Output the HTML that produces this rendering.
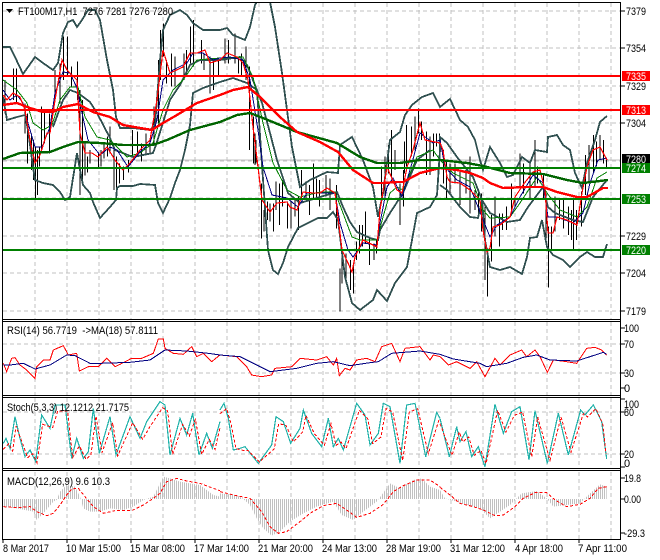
<!DOCTYPE html>
<html><head><meta charset="utf-8"><title>FT100M17,H1</title>
<style>
html,body{margin:0;padding:0;background:#fff;width:660px;height:560px;overflow:hidden}
svg{display:block}
text{font-family:"Liberation Sans",sans-serif;font-size:11px;fill:#000;white-space:pre}
polyline,path.n{fill:none;vector-effect:non-scaling-stroke}
.z *{vector-effect:non-scaling-stroke}
</style></head><body>
<svg width="660" height="560" viewBox="0 0 660 560" xmlns="http://www.w3.org/2000/svg">
<defs>
<pattern id="bars" patternUnits="userSpaceOnUse" width="2" height="4"><rect width="1" height="4" fill="#c0c0c0"/></pattern>
<clipPath id="main"><rect x="3" y="3" width="617" height="316"/></clipPath>
<clipPath id="hist">
<polygon transform="scale(.33333) translate(0,945)" points="10,552 10,575 50,580 100,590 110,615 130,595 160,560 170,555 180,530 200,510 225,515 240,545 250,580 270,590 300,590 330,580 370,585 400,575 430,555 460,545 480,505 490,485 510,490 540,500 570,505 600,510 640,540 660,545 660,552"/>
<polygon transform="translate(220,315) scale(.33333)" points="0,552 0,535 50,540 70,552 90,570 110,610 130,640 155,662 180,650 210,620 250,595 290,575 340,560 365,600 400,615 430,590 470,560 485,540 510,505 540,520 580,495 605,490 630,515 660,525 660,552"/>
<polygon transform="translate(440,315) scale(.33333)" points="0,552 0,525 15,550 50,560 80,570 120,580 150,610 180,590 210,570 230,550 245,535 290,528 320,550 340,575 380,570 420,565 440,545 480,508 500,515 500,552"/>
</clipPath>
</defs>
<rect width="660" height="560" fill="#fff"/>

<!-- grid -->
<g stroke="#c0c0c0" stroke-dasharray="4 3" fill="none" shape-rendering="crispEdges">
<path d="M35 3V319M67 3V319M99 3V319M131 3V319M163 3V319M195 3V319M227 3V319M259 3V319M291 3V319M323 3V319M355 3V319M387 3V319M419 3V319M451 3V319M483 3V319M515 3V319M547 3V319M579 3V319M611 3V319"/>
<path d="M3 11H620M3 48H620M3 86H620M3 123H620M3 161H620M3 198H620M3 236H620M3 273H620M3 311H620"/>
<path d="M35 322V395M67 322V395M99 322V395M131 322V395M163 322V395M195 322V395M227 322V395M259 322V395M291 322V395M323 322V395M355 322V395M387 322V395M419 322V395M451 322V395M483 322V395M515 322V395M547 322V395M579 322V395M611 322V395"/>
<path d="M3 344H620M3 373H620"/>
<path d="M35 398V468M67 398V468M99 398V468M131 398V468M163 398V468M195 398V468M227 398V468M259 398V468M291 398V468M323 398V468M355 398V468M387 398V468M419 398V468M451 398V468M483 398V468M515 398V468M547 398V468M579 398V468M611 398V468"/>
<path d="M3 412H620M3 454H620"/>
<path d="M35 472V539M67 472V539M99 472V539M131 472V539M163 472V539M195 472V539M227 472V539M259 472V539M291 472V539M323 472V539M355 472V539M387 472V539M419 472V539M451 472V539M483 472V539M515 472V539M547 472V539M579 472V539M611 472V539"/>
</g>
<path d="M3 160H620" stroke="#c0c0c0" shape-rendering="crispEdges"/>

<g clip-path="url(#main)">
<!-- candle wicks -->
<g class="z" stroke="#000" stroke-width="1" fill="none" shape-rendering="crispEdges">
<path transform="scale(.33333)" d="M15 240V340M40 205V300M50 205V310M75 310V400M83 340V490M95 400V510M100 420V540M107 440V595M112 450V585M118 440V500M125 320V450M133 330V430M148 340V460M165 210V300M180 190V310M190 110V240M202 110V230M215 200V260M232 185V300M240 270V585M248 300V550M255 425V527M262 470V517M270 450V490M295 460V505M303 450V500M312 430V475M322 410V470M330 380V460M342 440V570M350 470V590M358 490V550M370 500V540M385 480V517M397 390V470M413 395V470M425 430V485M438 400V460M450 420V460M462 320V430M475 180V370M482 90V240M490 70V170M500 180V250M515 160V260M525 170V260M552 160V240M560 150V230M572 80V190M580 60V200M605 120V190M612 160V210M630 170V280M640 180V270M655 175V230"/>
<path transform="translate(220,0) scale(.33333)" d="M15 115V190M25 120V190M45 100V190M55 170V220M65 160V225M78 140V240M88 200V450M100 350V490M105 400V495M108 420V490M125 550V715M132 630V695M142 605V660M150 610V665M160 610V695M168 545V630M178 550V675M188 540V620M203 605V685M213 605V685M225 595V650M235 590V690M245 510V600M258 545V595M268 555V645M280 490V600M290 535V595M298 540V620M318 525V590M330 535V630M350 555V685M360 805V935M366 760V850M378 760V850M392 780V870M400 800V880M410 725V780M418 675V760M428 675V740M436 635V730M448 715V795M462 730V780M470 720V760M485 500V590M495 470V600M505 435V520M515 390V530M525 450V510M540 550V675M550 510V620M553 425V520M560 375V500M575 380V470M585 350V450M595 325V400M605 365V420M620 395V525M630 410V525M640 400V470M650 400V440M658 400V440"/>
<path transform="translate(440,0) scale(.33333)" d="M10 450V550M20 480V600M30 490V580M45 490V550M60 510V615M78 510V580M90 470V640M105 570V630M115 570V640M125 580V695M135 620V840M143 745V890M155 645V785M165 590V710M178 640V740M188 640V690M200 620V690M215 550V640M225 590V620M240 460V560M250 490V580M270 490V600M285 420V560M293 500V550M310 520V600M318 580V735M325 680V862M335 680V750M345 590V695M358 595V660M370 600V685M385 620V705M395 630V720M400 600V750M410 630V720M425 575V680M437 465V585M447 435V550M460 405V520M470 425V500M480 405V480M490 420V490M500 475V505"/>
</g>
<!-- bollinger bands -->
<g fill="none" stroke="#2f4f4f" stroke-width="1.8" shape-rendering="crispEdges">
<polyline points="3,47 10,47 15,57 23,74 28,67 35,57 43,63 53,70 58,63 63,33 68,22 73,20 77,27 82,20 88,10 95,10 100,20 107,60 113,90 116,117 120,128 133,128 150,130 155,125 160,60 163,30 170,15 180,10 187,15 193,23 203,30 220,30 227,28 233,35 245,40 250,27 255,5 257,2 270,2 275,27 282,73 287,110 292,147 300,187 310,180 327,172 338,173 340,145 352,137 363,160 373,187 378,217 383,193 390,140 400,132 405,115 412,105 422,97 433,93 440,107 450,99 460,120 468,127 475,140 480,160 483,170 490,147 500,163 507,177 513,175 522,157 530,163 535,150 547,152 548,137 557,135 563,145 570,150 575,173 582,188 587,163 595,140 600,122 607,116"/>
<polyline points="3,97 7,120 17,117 25,115 28,130 33,167 35,180 43,183 53,185 60,192 65,200 70,197 77,153 80,170 83,185 90,193 93,202 100,218 110,207 116,200 117,188 120,186 133,186 140,184 155,185 158,203 163,213 170,198 175,183 180,170 185,150 190,125 193,93 203,88 220,82 233,78 247,83 257,90 262,165 268,250 273,270 278,274 283,263 288,247 298,228 308,223 318,218 327,218 333,212 338,220 345,277 352,303 360,310 373,300 377,290 387,301 395,283 407,267 417,213 430,207 437,195 440,150 440,137 447,143 457,157 473,177 482,200 485,240 490,267 500,270 510,267 522,274 527,257 530,238 537,237 542,220 547,247 553,255 563,260 570,267 580,257 587,252 595,257 603,257 607,244"/>
<polyline points="53,127 63,100 70,90 78,93 90,102 97,113 110,138 115,150 133,157 153,153 156,145 170,100 180,85 190,65 200,60 220,60 240,57 247,65 262,103 270,133 277,160 288,193 300,203 310,200 320,197 337,192 343,207 350,222 357,232 370,238 378,240 380,230 390,213 403,193 417,160 430,150"/>
<polyline points="440,185 447,190 460,207 470,217 478,218 482,200 490,213 507,222 520,220 528,207 543,187 548,207 555,213 573,220 583,222 593,197 607,180"/>
</g>
<!-- moving averages -->
<g fill="none" shape-rendering="crispEdges">
<polyline stroke="#008000" stroke-width="1" points="3,80 17,90 27,103 33,123 43,130 52,125 60,100 70,87 78,87 85,117 97,137 110,140 117,147 127,157 140,153 153,143 163,110 173,90 183,80 197,60 220,58 243,57 253,77 263,123 273,163 287,190 300,197 320,192 335,192 343,213 352,237 360,240 377,240 383,217 390,193 397,187 403,190 417,157 433,150 440,160 453,173 473,183 483,210 490,218 510,217 520,203 537,177 547,193 560,210 577,217 587,207 597,178 607,172"/>
<polyline stroke="#000080" stroke-width="1" points="3,90 10,100 17,95 23,103 28,123 35,147 42,147 50,127 55,93 63,72 70,73 77,88 82,113 88,140 100,155 110,147 117,150 128,167 140,152 150,143 157,120 163,80 173,70 187,63 193,53 203,53 213,60 220,58 230,57 243,60 250,80 258,130 263,167 272,195 287,198 298,207 307,193 320,193 335,193 340,223 348,250 353,257 363,243 377,245 380,223 387,187 393,178 402,197 412,163 420,133 433,143 440,140 445,167 457,180 470,187 482,217 490,237 497,225 510,217 520,197 533,175 543,183 548,217 557,217 573,223 583,213 590,183 598,160 607,158"/>
<polyline stroke="#ff0000" stroke-width="1.2" points="3,95 7,100 13,93 20,97 25,110 30,140 35,163 40,155 47,133 50,133 55,100 62,60 67,70 77,80 80,133 85,153 92,153 98,157 107,147 115,160 123,170 130,163 140,150 150,140 157,100 163,50 170,73 183,67 190,53 197,53 205,50 210,63 220,60 227,53 237,57 243,63 248,80 253,127 258,167 262,200 270,212 277,203 287,202 290,207 297,210 303,192 313,193 320,193 327,188 335,193 338,217 342,250 348,263 352,272 355,257 363,240 373,245 377,247 380,210 387,167 397,190 402,193 407,167 413,150 420,123 425,140 440,143 443,150 447,177 450,182 460,183 470,190 480,200 483,230 487,252 490,248 493,227 500,225 510,217 515,197 523,185 533,172 540,170 545,190 548,233 553,233 557,217 567,220 577,225 582,193 587,167 593,150 600,147 607,160"/>
<polyline stroke="#006400" stroke-width="2.4" points="3,159 20,153 50,152 63,147 78,142 100,143 123,145 153,145 167,140 190,130 220,122 237,115 250,113 263,118 297,132 337,143 360,157 377,163 400,163 420,160 440,160 467,163 483,166 510,173 543,174 567,180 583,183 608,180"/>
<polyline stroke="#ff0000" stroke-width="2.4" points="3,105 17,103 30,108 43,112 53,112 63,107 78,104 93,112 110,117 123,125 140,128 152,130 163,123 177,115 197,103 220,95 233,90 248,87 260,97 280,117 297,132 320,142 338,152 353,170 373,183 383,183 397,182 403,182 420,173 440,168 457,170 470,173 483,178 490,183 503,188 527,187 543,187 557,192 577,197 587,197 603,188 608,188"/>
</g>
<!-- levels -->
<g shape-rendering="crispEdges">
<rect x="3" y="75" width="617" height="2" fill="#ff0000"/>
<rect x="3" y="109" width="617" height="2" fill="#ff0000"/>
<rect x="3" y="167" width="617" height="2" fill="#008000"/>
<rect x="3" y="198" width="617" height="2" fill="#008000"/>
<rect x="3" y="249" width="617" height="2" fill="#008000"/>
</g>
</g>

<!-- RSI -->
<g class="z" fill="none" shape-rendering="crispEdges">
<g transform="translate(0,315) scale(.33333)">
<polyline stroke="#ff0000" points="10,145 20,170 35,130 45,128 60,150 80,165 105,190 110,155 130,135 150,135 160,105 190,92 205,120 230,115 238,168 265,155 295,155 320,130 345,155 360,148 395,130 425,130 460,115 475,72 490,72 495,100 520,115 550,118 575,95 590,125 610,115 635,140 660,120"/>
<polyline stroke="#000080" points="10,150 30,150 70,145 105,162 150,150 200,120 225,122 270,145 300,145 390,142 450,135 495,105 560,108 625,115 660,120"/>
</g>
<g transform="translate(220,315) scale(.33333)">
<polyline stroke="#ff0000" points="0,120 50,125 80,155 95,180 125,185 155,180 165,160 215,155 240,130 290,135 320,125 340,150 350,130 358,182 375,160 390,165 410,135 440,130 465,140 485,95 515,85 540,140 555,100 600,95 630,135 640,120 660,125"/>
<polyline stroke="#000080" points="0,120 60,125 100,145 150,170 230,160 290,145 340,140 390,152 450,143 475,140 515,115 600,108 660,118"/>
</g>
<g transform="translate(440,315) scale(.33333)">
<polyline stroke="#ff0000" points="0,125 25,150 50,140 90,160 110,140 135,185 165,130 180,150 210,120 245,105 260,125 285,105 300,125 322,172 340,135 380,140 410,145 440,100 465,97 485,105 500,120"/>
<polyline stroke="#000080" points="0,118 40,132 120,145 140,155 200,145 250,127 290,120 330,135 410,138 450,125 490,112 500,118"/>
</g>
<!-- Stoch -->
<g transform="translate(0,315) scale(.33333)">
<polyline stroke="#20b2aa" stroke-width="1.2" points="10,385 18,370 30,400 45,305 60,370 75,425 90,405 107,440 125,300 150,340 165,270 195,270 215,430 230,370 250,430 265,410 280,280 298,415 330,305 348,420 390,305 420,370 440,320 480,260 495,270 510,420 540,310 560,360 578,295 597,420 620,355 637,400 660,320"/>
<polyline stroke="#ff0000" stroke-dasharray="3 2" transform="translate(8,8)" points="2,395 18,378 30,400 40,325 55,365 75,420 90,408 103,435 120,320 150,330 165,280 195,280 210,420 230,385 250,425 265,410 280,295 298,405 330,315 345,415 390,315 420,365 440,330 480,270 495,280 510,410 540,320 560,355 578,305 597,410 620,365 637,395 652,330"/>
</g>
<g transform="translate(220,315) scale(.33333)">
<polyline stroke="#20b2aa" stroke-width="1.2" points="0,285 12,265 25,310 40,405 60,400 75,395 115,445 155,390 168,305 190,320 212,385 240,340 250,285 275,355 305,395 325,310 340,395 355,370 370,405 410,265 435,300 450,390 475,355 490,265 510,275 540,445 560,270 585,265 617,425 650,292 660,310"/>
<polyline stroke="#ff0000" stroke-dasharray="3 2" transform="translate(8,6)" points="-8,290 12,275 25,320 40,395 60,400 75,400 110,435 155,395 168,320 190,325 212,375 240,345 250,295 275,350 305,385 325,320 340,385 355,375 370,395 410,280 435,305 450,380 475,360 490,275 510,285 540,430 560,285 585,275 617,410 650,305"/>
</g>
<g transform="translate(440,315) scale(.33333)">
<polyline stroke="#20b2aa" stroke-width="1.2" points="0,310 28,425 50,335 60,380 78,350 95,425 115,395 135,455 165,268 190,355 215,290 240,275 267,435 285,287 322,445 355,295 385,420 422,285 435,300 460,270 485,320 500,432"/>
<polyline stroke="#ff0000" stroke-dasharray="3 2" transform="translate(8,6)" points="-8,320 28,415 50,345 60,375 78,360 95,415 115,400 130,440 165,280 190,345 215,295 240,285 267,420 285,300 322,430 355,300 385,405 422,290 435,300 460,275 480,320 490,410"/>
</g>
</g>

<!-- MACD -->
<rect x="3" y="472" width="617" height="66" fill="url(#bars)" clip-path="url(#hist)" shape-rendering="crispEdges"/>
<g class="z" fill="none" stroke="#ff0000" stroke-dasharray="3 2" shape-rendering="crispEdges">
<polyline transform="translate(0,315) scale(.33333)" points="10,575 50,578 90,575 110,590 140,602 160,595 180,570 200,540 215,522 235,520 255,545 280,575 310,595 345,587 395,587 430,570 460,550 480,535 500,500 530,490 560,498 600,505 640,520 660,527"/>
<polyline transform="translate(220,315) scale(.33333)" points="0,530 40,540 90,550 125,590 150,635 175,655 200,650 240,620 270,595 310,572 350,565 380,585 410,607 450,595 490,568 520,530 550,512 590,495 630,495 660,515"/>
<polyline transform="translate(440,315) scale(.33333)" points="0,517 30,540 60,565 100,575 130,585 165,602 190,600 225,575 250,550 285,533 320,533 345,555 380,575 420,568 450,550 475,520 500,515"/>
</g>

<!-- frames -->
<g fill="#000" shape-rendering="crispEdges">
<rect x="2" y="2" width="619" height="1"/>
<rect x="2" y="319" width="619" height="1"/>
<rect x="2" y="321" width="619" height="1"/>
<rect x="2" y="395" width="619" height="1"/>
<rect x="2" y="397" width="619" height="1"/>
<rect x="2" y="468" width="619" height="1"/>
<rect x="2" y="470" width="619" height="1"/>
<rect x="2" y="539" width="619" height="1"/>
<rect x="2" y="2" width="1" height="538"/>
<rect x="620" y="2" width="1" height="538"/>
</g>
<!-- axis ticks -->
<path d="M620 11h5M620 48h5M620 86h5M620 123h5M620 236h5M620 273h5M620 311h5M620 328h5M620 344h5M620 373h5M620 388h5M620 399h5M620 412h5M620 454h5M620 467h5M620 478h5M620 499h5M620 533h5M3 539v4M67 539v4M131 539v4M195 539v4M259 539v4M323 539v4M387 539v4M451 539v4M515 539v4M579 539v4" stroke="#000" shape-rendering="crispEdges"/>

<!-- titles -->
<polygon points="6,9 13,9 9.5,13" fill="#000"/>
<text x="18" y="15" textLength="155" lengthAdjust="spacingAndGlyphs" xml:space="preserve">FT100M17,H1  7276 7281 7276 7280</text>
<text x="7" y="334" textLength="151" lengthAdjust="spacingAndGlyphs" xml:space="preserve">RSI(14) 56.7719  -&gt;MA(18) 57.8111</text>
<text x="7" y="411" textLength="122" lengthAdjust="spacingAndGlyphs">Stoch(5,3,3) 12.1212 21.7175</text>
<text x="7" y="485" textLength="103" lengthAdjust="spacingAndGlyphs">MACD(12,26,9) 9.6 10.3</text>

<!-- price axis -->
<g>
<text x="626" y="15" textLength="20" lengthAdjust="spacingAndGlyphs">7379</text>
<text x="626" y="52" textLength="20" lengthAdjust="spacingAndGlyphs">7354</text>
<text x="626" y="90" textLength="20" lengthAdjust="spacingAndGlyphs">7329</text>
<text x="626" y="127" textLength="20" lengthAdjust="spacingAndGlyphs">7304</text>
<text x="626" y="240" textLength="20" lengthAdjust="spacingAndGlyphs">7229</text>
<text x="626" y="277" textLength="20" lengthAdjust="spacingAndGlyphs">7204</text>
<text x="626" y="315" textLength="20" lengthAdjust="spacingAndGlyphs">7179</text>
</g>
<g shape-rendering="crispEdges">
<rect x="622" y="71" width="28" height="10" fill="#ff0000"/>
<rect x="622" y="105" width="28" height="10" fill="#ff0000"/>
<rect x="622" y="154" width="28" height="10" fill="#000"/>
<rect x="622" y="163" width="28" height="10" fill="#008000"/>
<rect x="622" y="194" width="28" height="10" fill="#008000"/>
<rect x="622" y="245" width="28" height="10" fill="#008000"/>
</g>
<g>
<text x="626" y="80" style="fill:#fff" textLength="20" lengthAdjust="spacingAndGlyphs">7335</text>
<text x="626" y="114" style="fill:#fff" textLength="20" lengthAdjust="spacingAndGlyphs">7313</text>
<text x="626" y="163" style="fill:#fff" textLength="20" lengthAdjust="spacingAndGlyphs">7280</text>
<text x="626" y="172" style="fill:#fff" textLength="20" lengthAdjust="spacingAndGlyphs">7274</text>
<text x="626" y="203" style="fill:#fff" textLength="20" lengthAdjust="spacingAndGlyphs">7253</text>
<text x="626" y="254" style="fill:#fff" textLength="20" lengthAdjust="spacingAndGlyphs">7220</text>
</g>
<!-- indicator axes -->
<text x="624" y="332" textLength="15" lengthAdjust="spacingAndGlyphs">100</text>
<text x="624" y="348" textLength="10" lengthAdjust="spacingAndGlyphs">70</text>
<text x="624" y="377" textLength="10" lengthAdjust="spacingAndGlyphs">30</text>
<text x="624" y="392">0</text>
<text x="624" y="408" textLength="15" lengthAdjust="spacingAndGlyphs">100</text>
<text x="624" y="416" textLength="10" lengthAdjust="spacingAndGlyphs">80</text>
<text x="624" y="458" textLength="10" lengthAdjust="spacingAndGlyphs">20</text>
<text x="624" y="467">0</text>
<text x="624" y="482" textLength="17" lengthAdjust="spacingAndGlyphs">19.8</text>
<text x="624" y="503" textLength="17" lengthAdjust="spacingAndGlyphs">0.00</text>
<text x="624" y="537" textLength="21" lengthAdjust="spacingAndGlyphs">-29.3</text>
<!-- time axis -->
<g>
<text x="3" y="552" textLength="46" lengthAdjust="spacingAndGlyphs">8 Mar 2017</text>
<text x="66" y="552" textLength="55" lengthAdjust="spacingAndGlyphs">10 Mar 15:00</text>
<text x="130" y="552" textLength="55" lengthAdjust="spacingAndGlyphs">15 Mar 08:00</text>
<text x="194" y="552" textLength="55" lengthAdjust="spacingAndGlyphs">17 Mar 14:00</text>
<text x="258" y="552" textLength="55" lengthAdjust="spacingAndGlyphs">21 Mar 20:00</text>
<text x="322" y="552" textLength="55" lengthAdjust="spacingAndGlyphs">24 Mar 13:00</text>
<text x="386" y="552" textLength="55" lengthAdjust="spacingAndGlyphs">28 Mar 19:00</text>
<text x="450" y="552" textLength="55" lengthAdjust="spacingAndGlyphs">31 Mar 12:00</text>
<text x="515" y="552" textLength="48" lengthAdjust="spacingAndGlyphs">4 Apr 18:00</text>
<text x="578" y="552" textLength="49" lengthAdjust="spacingAndGlyphs">7 Apr 11:00</text>
</g>
</svg>
</body></html>
